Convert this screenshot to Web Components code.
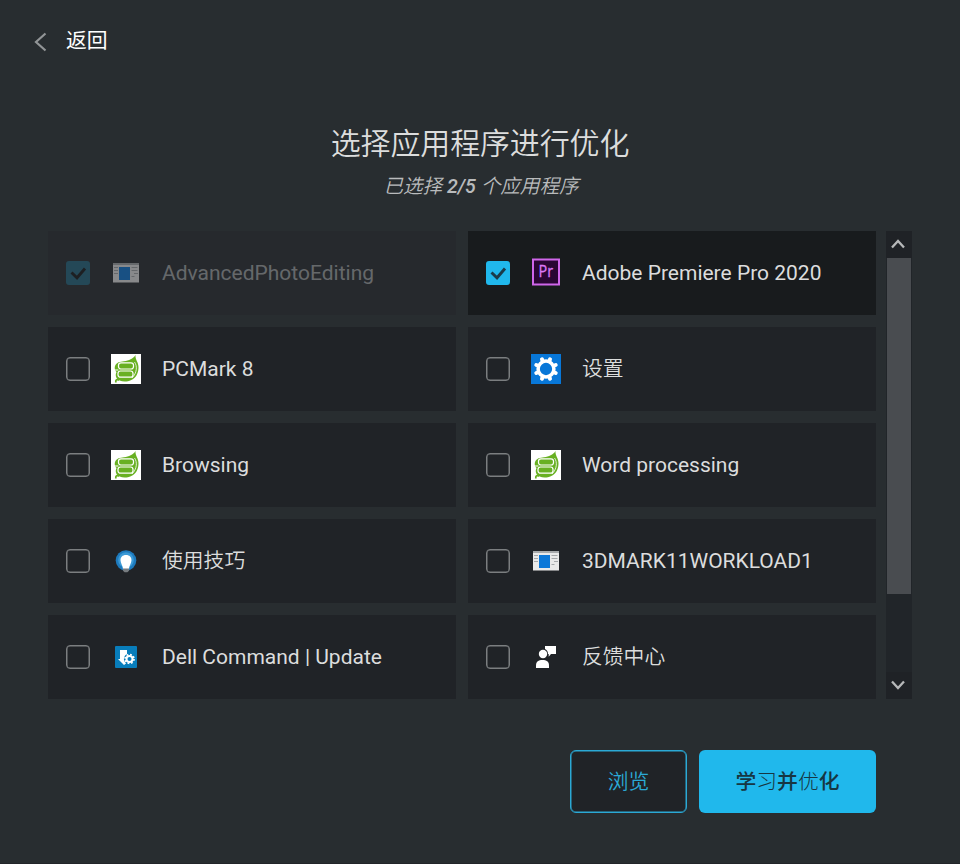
<!DOCTYPE html>
<html lang="zh-CN">
<head>
<meta charset="utf-8">
<title>选择应用程序进行优化</title>
<style>
  html, body { margin: 0; height: 100%; background: #282d30; }
  body { font-family: Roboto, "Noto Sans CJK SC", sans-serif; color: #dcdddd; overflow: hidden; }
  b { font-weight: 500; }
</style>
</head>
<body>
<optimizer-page>
  <back-link slot="back">返回</back-link>
  <span slot="title">选择应用程序进行优化</span>
  <span slot="count">已选择 <b>2/5</b> 个应用程序</span>
  <app-item icon="window" checked disabled>AdvancedPhotoEditing</app-item>
  <app-item icon="premiere" checked>Adobe Premiere Pro 2020</app-item>
  <app-item icon="pcmark">PCMark 8</app-item>
  <app-item icon="settings" cjk>设置</app-item>
  <app-item icon="pcmark">Browsing</app-item>
  <app-item icon="pcmark">Word processing</app-item>
  <app-item icon="tips" cjk>使用技巧</app-item>
  <app-item icon="window">3DMARK11WORKLOAD1</app-item>
  <app-item icon="dell">Dell Command | Update</app-item>
  <app-item icon="feedback" cjk>反馈中心</app-item>
  <scroll-rail slot="scroll"></scroll-rail>
  <action-button slot="actions">浏览</action-button>
  <action-button slot="actions" primary><b>学</b>习<b>并</b>优<b>化</b></action-button>
</optimizer-page>

<script>
(function () {
  const icons = {
    window: `
      <rect x="2" y="5" width="26" height="19.500" fill="#e9e9e9"/>
      <path d="M2 6h26" stroke="#a6a9ab" stroke-width="2"/>
      <path d="M3 9.500h4M3 12.500h4M3 15.500h4M20.500 9.500h6M20.500 12.500h6M23 15.500h4M20.500 18.500h3" stroke="#a5a8aa"/>
      <rect x="8" y="9" width="11" height="13" fill="#0c78d8"/>`,
    premiere: `
      <rect x="2" y="1.500" width="26" height="25" fill="#2a0634" stroke="#cf66ea" stroke-width="2"/>
      <text x="7.500" y="19" font-family="Open Sans, sans-serif" font-size="16" textLength="14.500" lengthAdjust="spacingAndGlyphs" fill="#dc78f6" stroke="#dc78f6" stroke-width=".3">Pr</text>`,
    pcmark: `
      <rect width="30" height="30" fill="#fff"/>
      <path d="M4.800 28.500C4.500 25.500 6 25 8 26.200" fill="none" stroke="#68b022" stroke-width="1.800"/>
      <path d="M24.500 1C24 6 27.800 8 27.500 14c-.3 7-4 12-10.500 13.200c-5 .8-10-.2-11.500-3.200c-1.200-2.500-.8-4.500 0-6c-2-1.500-2-4.500-1.500-6C5.500 8 9 8 13 7.300C18 6.500 22 5 24.500 1z" fill="#68b022"/>
      <path d="M23.500 8C26.500 12 26 19 21 24" fill="none" stroke="#fff" stroke-width=".8"/>
      <rect x="7.500" y="8.800" width="15" height="6.200" rx="2.500" fill="#68b022" stroke="#fff" stroke-width="1.200"/>
      <rect x="7" y="17" width="15" height="6.200" rx="2.500" fill="#68b022" stroke="#fff" stroke-width="1.200"/>
      <path d="M3 16h4.500" stroke="#fff" stroke-width="1"/>`,
    settings: `
      <rect width="30" height="30" fill="#0877d8"/>
      <circle cx="15" cy="15" r="7.900" fill="none" stroke="#fff" stroke-width="3.500"/>
      <g stroke="#fff" stroke-width="4" stroke-linecap="round" transform="rotate(22.500 15 15)">
        <path d="M15 4.500v2M15 23.500v2M4.500 15h2M23.500 15h2M7.575 7.575l1.400 1.400M21.025 21.025l1.400 1.400M22.425 7.575l-1.400 1.400M7.575 22.425l1.400-1.400"/>
      </g>`,
    tips: `
      <circle cx="15" cy="14.500" r="10.300" fill="#1d7abd"/>
      <circle cx="15" cy="14" r="7.800" fill="#3c9ad6"/>
      <path d="M15 9c-3.600 0-5.500 2.200-5.500 5.200c0 3 2.300 5 2.500 9h6c.2-4 2.500-6 2.500-9C20.500 11.200 18.600 9 15 9z" fill="#fff"/>
      <path d="M12 22.500h6v2.200l-1.600 1.600h-2.800L12 24.700z" fill="#777c80"/>`,
    dell: `
      <rect x="4" y="4" width="22" height="22" rx="1" fill="#087dbb"/>
      <path d="M9 8h7v4l-2 4l1 5.500L13 23l-6-6h2z" fill="#fff"/>
      <circle cx="18.500" cy="17" r="5.600" fill="#087dbb"/>
      <circle cx="18.500" cy="17" r="3" fill="none" stroke="#fff" stroke-width="2"/>
      <circle cx="18.500" cy="17" r="4.500" fill="none" stroke="#fff" stroke-width="1.700" stroke-dasharray="1.767 1.767"/>`,
    feedback: `
      <circle cx="12" cy="12" r="4.200" fill="#fff"/>
      <path d="M5 26v-2.500c0-4 2.500-5.500 6.500-5.500s6.500 1.500 6.500 5.500V26z" fill="#fff"/>
      <path d="M14 4h11v8h-5l-2.300 2.700V12H17c0-3-1.500-4-3-5z" fill="#fff"/>`
  };

  const attach = (host, html) => {
    const template = document.createElement("template");
    template.innerHTML = html;
    host.attachShadow({ mode: "open" }).appendChild(template.content.cloneNode(true));
  };

  class OptimizerPage extends HTMLElement {
    constructor() {
      super();
      attach(this, `
        <style>
          :host { display: flex; flex-direction: column; box-sizing: border-box; width: 960px; height: 864px; padding: 22px 48px 0; background: #282d30; border-bottom: 1px solid #222529; }
          nav { height: 38px; margin-left: -14px; }
          header { display: flex; flex-direction: column; align-items: center; margin-top: 62px; height: 109px; }
          h1 { margin: 0; font-size: 30px; line-height: 44px; font-weight: 350; letter-spacing: -.15px; }
          p { margin: 7px 0 0 2px; font-size: 19.600px; line-height: 28px; font-weight: 350; font-style: italic; color: #b9bbbc; }
          main { display: flex; gap: 10px; height: 468px; }
          .grid { display: grid; grid-template-columns: 408px 408px; grid-auto-rows: 84px; gap: 12px; }
          footer { display: flex; justify-content: flex-end; gap: 12px; margin: 51px 36px 0 0; }
        </style>
        <nav><slot name="back"></slot></nav>
        <header>
          <h1><slot name="title"></slot></h1>
          <p><slot name="count"></slot></p>
        </header>
        <main>
          <div class="grid"><slot></slot></div>
          <slot name="scroll"></slot>
        </main>
        <footer><slot name="actions"></slot></footer>
      `);
    }
  }

  class BackLink extends HTMLElement {
    constructor() {
      super();
      attach(this, `
        <style>
          :host { display: flex; align-items: center; gap: 19px; height: 38px; font-size: 20.800px; color: #fff; }
          svg { margin-top: 2px; }
          span { margin-top: -4px; }
        </style>
        <svg width="13" height="20" fill="none" stroke="#929597" stroke-width="2.200"><path d="M11.500 1.500L2 10l9.500 8.500"/></svg>
        <span><slot></slot></span>
      `);
    }
  }

  class AppItem extends HTMLElement {
    constructor() {
      super();
      const check = this.hasAttribute("checked")
        ? `<path d="M5.500 11.500l5.500 5.300l8-9.300" fill="none" stroke="#1b3b49" stroke-width="2.900"/>` : "";
      attach(this, `
        <style>
          :host { display: flex; align-items: center; box-sizing: border-box; padding-left: 18px; background: #202327; font-size: 21px; }
          :host([checked]) { background: #181b1d; }
          :host([disabled]) { background: #26292d; }
          :host([disabled]) .icon { opacity: .5; }
          :host([disabled]) .label { opacity: .35; }
          :host([cjk]) .label { font-weight: 350; font-size: 20.800px; margin-top: -4px; }
          .box { box-sizing: border-box; width: 24px; height: 24px; border: 1px solid #7b7e80; border-radius: 4px; box-shadow: inset 0 0 0 .5px #7b7e80; }
          :host([checked]) .box { border: 0; border-radius: 3px; background: #20b8ec; box-shadow: none; }
          :host([disabled]) .box { opacity: .22; }
          :host([disabled]) .box path { stroke: #000; }
          .box svg { display: block; }
          .icon { margin: -1px 0 0 21px; }
          .label { margin-left: 21px; white-space: nowrap; }
        </style>
        <div class="box">${check && `<svg width="24" height="24">${check}</svg>`}</div>
        <svg class="icon" width="30" height="30" viewBox="0 0 30 30">${icons[this.getAttribute("icon")]}</svg>
        <span class="label"><slot></slot></span>
      `);
    }
  }

  class ScrollRail extends HTMLElement {
    constructor() {
      super();
      attach(this, `
        <style>
          :host { display: flex; flex-direction: column; width: 26px; height: 468px; background: #212529; }
          .end { display: flex; align-items: center; justify-content: center; box-sizing: border-box; height: 27px; padding: 0 2px 1px 0; background: #1f2226; }
          .track { flex: 1; padding: 0 1px; }
          .thumb { height: 336px; background: #494c50; }
          svg { fill: none; stroke: #b6b8b9; stroke-width: 2.300; }
        </style>
        <div class="end"><svg width="16" height="10"><path d="M2 8.500L8 2l6 6.500"/></svg></div>
        <div class="track"><div class="thumb"></div></div>
        <div class="end"><svg width="16" height="10"><path d="M2 1.500L8 8l6-6.500"/></svg></div>
      `);
    }
  }

  class ActionButton extends HTMLElement {
    constructor() {
      super();
      attach(this, `
        <style>
          :host { display: flex; box-sizing: border-box; align-items: center; justify-content: center; width: 117px; height: 63px; padding-bottom: 4px; border: 1px solid #2ba9d5; border-radius: 6px; box-shadow: inset 0 0 0 .5px #2ba9d5; background: #202327; color: #2ba9d5; font-size: 20.800px; font-weight: 350; }
          :host([primary]) { width: 177px; border: 0; box-shadow: none; background: #20b8ec; color: #173642; font-weight: 300; }
        </style>
        <slot></slot>
      `);
    }
  }

  customElements.define("optimizer-page", OptimizerPage);
  customElements.define("back-link", BackLink);
  customElements.define("app-item", AppItem);
  customElements.define("scroll-rail", ScrollRail);
  customElements.define("action-button", ActionButton);
})();
</script>
</body>
</html>
